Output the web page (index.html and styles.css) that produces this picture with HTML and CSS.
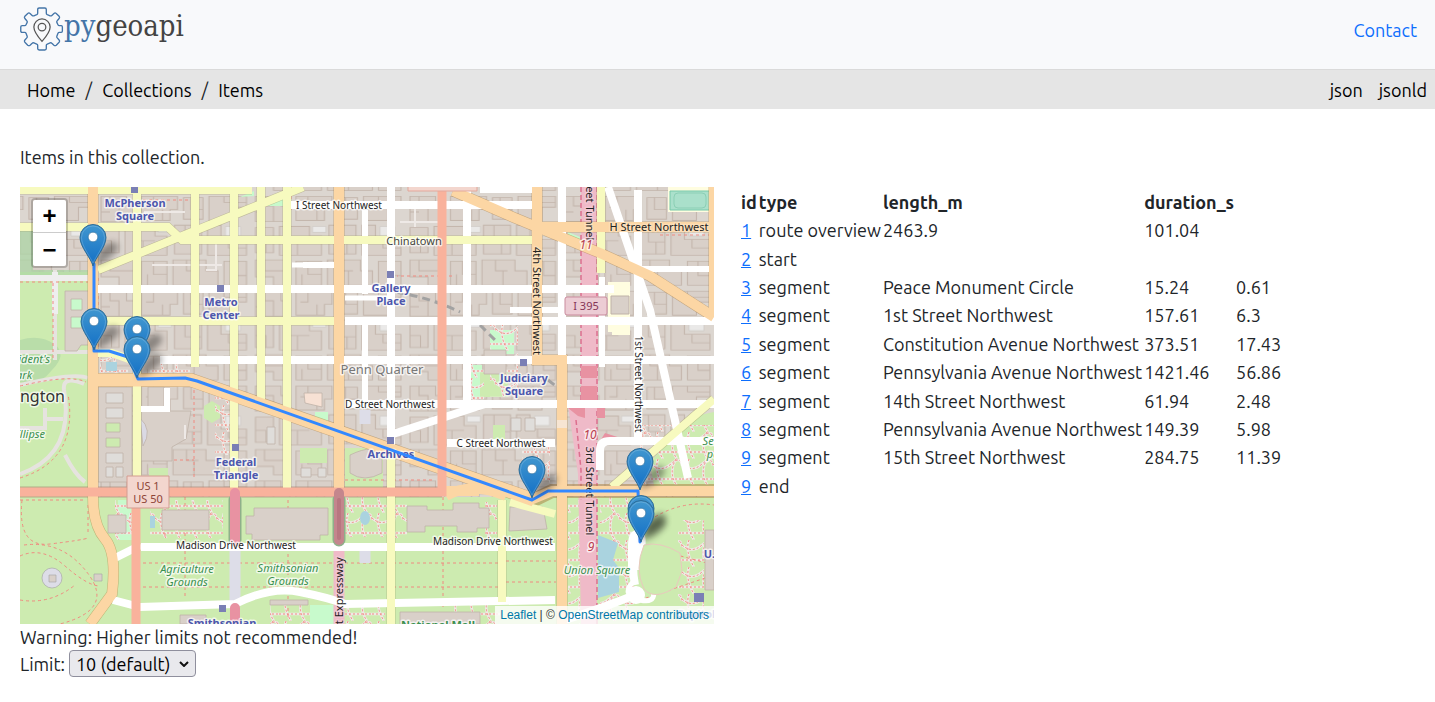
FILE: index.html
```html
<!DOCTYPE html>
<html lang="en">
<head>
<meta charset="utf-8">
<title>Items - pygeoapi</title>
<meta name="viewport" content="width=device-width, initial-scale=1">
<link rel="stylesheet" href="styles.css">
</head>
<body>
<header class="navbar">
  <a class="brand" href="#" aria-label="pygeoapi home">
    <svg class="brand-gear" viewBox="-1 -1 46 46" aria-hidden="true">
      <path fill="none" stroke="#4475a8" stroke-width="1.400" stroke-linejoin="round" d="M19 0h6q1.500 0 1.500 1.500v4q0 1 1 1.500l3 1.200q1 .4 1.800-.4l2.200-2.100q1.200-1 2.400 0l3 3q1 1.200 0 2.400l-2 2.200q-.8.800-.4 1.800l1.200 2.400q.4 1 1.400 1h2q1.200 0 1.200 1.500v4q0 1.500-1.200 1.500h-2q-1 0-1.400 1l-1.200 3q-.4 1 .4 1.800l2 2.200q1 1.200 0 2.400l-3 3q-1.200 1-2.400 0l-2.200-2q-.8-.8-1.800-.4l-3 1.200q-1 .4-1 1.400v3.400q0 1.500-1.500 1.500h-6q-1.500 0-1.500-1.500v-3.400q0-1-1-1.400l-3-1.200q-1-.4-1.800.4l-2.200 2q-1.200 1-2.400 0l-3-3q-1-1.200 0-2.400l2-2.200q.8-.8.400-1.800l-1.200-3q-.4-1-1.400-1h-2.600q-1.500 0-1.500-1.500v-4q0-1.500 1.500-1.500h2.600q1 0 1.400-1l1.200-2.400q.4-1-.4-1.800l-2-2.200q-1-1.200 0-2.400l3-3q1.200-1 2.400 0l2.200 2.100q.8.800 1.800.4l3-1.200q1-.5 1-1.500v-4q0-1.500 1.500-1.500z"/>
      <path fill="none" stroke="#555" stroke-width="1.300" d="M22 35c-4-4.500-8.500-10-8.500-15a8.500 8.500 0 0 1 17 0c0 5-4.500 10.500-8.500 15z"/>
      <circle cx="22" cy="20" r="4" fill="none" stroke="#555" stroke-width="1.300"/>
    </svg>
    <span class="brand-name"><span class="brand-py">py</span>geoapi</span>
  </a>
  <nav><a class="contact" href="#">Contact</a></nav>
</header>

<div class="crumbs">
  <nav class="crumb-path" aria-label="Breadcrumb">
    <a href="#">Home</a><span>/</span><a href="#">Collections</a><span>/</span><a href="#">Items</a>
  </nav>
  <nav class="formats" aria-label="Formats"><a href="#">json</a><a href="#">jsonld</a></nav>
</div>

<main class="page">
  <p class="intro">Items in this collection.</p>
  <div class="columns">
    <section class="left">
      <div class="map">
        <svg class="map-canvas" viewBox="20 187 694 437" preserveAspectRatio="xMidYMid slice" role="img" aria-label="Street map with route">
          <defs>
            <pattern id="blocks" width="103" height="79" patternUnits="userSpaceOnUse" patternTransform="translate(98 194) scale(1.500 1.200)">
              <rect width="103" height="79" fill="#dcd6d0"/>
              <g fill="#d9d0c9" stroke="#c3b5ab" stroke-width=".7">
                <path d="M2 2h17v8h6v13H2zM29 2h24v11h-5v9H29zM57 3h13v18H57zM74 2h25v9h-9v11H74zM2 28h12v21H2zM18 27h20v8h8v16H18zM51 26h18v24H51zM73 26h9v12h17v13H73zM2 55h23v21H14v-7H2zM29 56h17v20H29zM50 55h22v9h8v12H50zM84 56h15v20H84z"/>
                <path fill="none" d="M8 2v8h6v13M2 15h6M37 2v9h-5M43 13v9M62 3v10h8M84 2v5h15M24 27v12h14M30 39v12M2 39h7v10M58 26v14h11M63 40v10M87 38v7h12M8 55v9h17M37 56v11h9M33 67v9M59 55v9h8M64 64v12M91 56v12h8"/>
              </g>
              <path d="M40 27h9v5h-9zM85 27h10v8H85z" fill="#eae9e8" stroke="#cfcac6" stroke-width=".6"/>
            </pattern>
            <pattern id="paths" width="31" height="27" patternUnits="userSpaceOnUse">
              <g fill="none" stroke="#eeeae6" stroke-width="2.500"><path d="M0 5Q10 14 20 5T31 7M7 0Q3 12 12 27M25 0Q17 14 26 27M0 20h31"/></g>
              <g fill="none" stroke="#f28a80" stroke-width="1" stroke-dasharray="2 2"><path d="M0 5Q10 14 20 5T31 7M7 0Q3 12 12 27M25 0Q17 14 26 27M0 20h31"/></g>
            </pattern>
            <linearGradient id="pinfill" x1="0" y1="0" x2="0" y2="1"><stop offset="0" stop-color="#4197cf"/><stop offset="1" stop-color="#126fc6"/></linearGradient>
            <filter id="soft" x="-50%" y="-50%" width="200%" height="200%"><feGaussianBlur stdDeviation="3"/></filter>
            <g id="pin">
              <path d="M0 0L7-17Q19-28 24-22T12-5z" fill="#000" opacity=".36" filter="url(#soft)"/>
              <path d="M0 0C-2-8-13-19-13-28.500a13 13 0 0 1 26 0C13-19 2-8 0 0z" fill="url(#pinfill)" stroke="#2e6c97" stroke-width="1"/>
              <path d="M0-3C-3-10-11.500-20-11.500-28.500a11.500 11.500 0 0 1 23 0C11.500-20 3-10 0-3z" fill="none" stroke="#fff" stroke-opacity=".18"/>
              <circle cy="-29" r="4.800" fill="#fff" stroke="#2e6c97" stroke-width=".6"/>
            </g>
          </defs>

          <rect x="20" y="187" width="694" height="437" fill="url(#blocks)"/>

          <!-- parks -->
          <path fill="#cdebb0" d="M20 272h68v225H20zM20 497h694v127H20z"/>
          <path fill="#a9d5a4" opacity=".7" d="M20 229h13v41h55v8H20z"/>
          <path fill="#b9dda9" d="M60 272h28v3H60zM20 340q20-6 34 4t-2 26q-14 18-32 12z"/>
          <path fill="#c8facc" d="M140 188h50v2h-50zM240 197l14-6v5zM265 203l18-7v10h-18zM315 412h13v14h-13zM470 365h12v32h-12zM490 330h24v24h-24zM568 232l12 5v4h-12zM310 605h25v19h-25zM118 500h20v40h-20z"/>
          <path fill="#cdebb0" d="M204 406l8-5 8 5v12l-8 5-8-5zM300 448h27v15h-27zM345 448h38v40h-38zM149 468h19v9h-19zM480 372h28v25h-28zM493 425h12v18h-12zM650 462l40-45 24-5v74h-60z"/>
          <path fill="url(#paths)" d="M100 355h28v18h-28zM150 363h40v10h-40zM490 325h28v72h-28zM522 445h28v38h-28zM600 497h34v124h-34zM345 497h42v40h-42zM150 500h73v38h-73zM640 425h74v60h-74zM470 360h14v40h-14zM345 605h40v19h-40zM115 500h20v40h-20zM568 500h12v124h-12zM395 502h12v36h-12zM485 502h12v36h-12zM678 520h26v90h-26zM215 395h20v60h-20zM270 605h40v19h-40zM450 605h50v19h-50z"/>
          <!-- ellipse and president's park paths -->
          <g fill="none" stroke="#e6e3df" stroke-width="4"><path d="M20 385Q75 372 88 378M55 270v90M20 474Q75 455 64 390Q62 375 84 384M20 352h68M65 455q10 20 20 27M45 408v20h-25M45 419h18"/></g>
          <path d="M55 272v42M20 278h68" stroke="#eee" stroke-width="6" fill="none"/>
          <g fill="none" stroke="#f08a80" stroke-width="1" stroke-dasharray="3 3"><path d="M53 283v77M20 282h68M20 386Q70 374 86 382M20 478Q79 460 68 394M20 500h66M22 500q-5 48 28 44t38-6M20 556q22-10 45 10t35 20M20 600q30 5 55-15M24 545q40-5 65 30T60 624M88 505v30M143 563h196M143 587h196M345 563h155M345 587h155M185 497v100M443 497v110M288 500v120M506 561h50M506 582h50M165 497v40M640 545l74 20M640 600l74-25M650 520q30-20 64-15M98 278v80M150 390v20M137 200h55M291 190v20M367 210v70M452 276h-55M345 321h46M262 350v50M660 235h54M640 270h74M345 480h90M194 390v90M144 460h50"/></g>
          <!-- museums and landmark buildings -->
          <g fill="#d9d0c9" stroke="#bfb2a8" stroke-width=".8">
            <path d="M65 291h24v54h-8l-4 6H65zM98 387h34v95h-34zM141 411h50l-5 28-14 8v14h-31zM162 510h47v20h-47zM254 508h74v27h-8v5h-68v-6h-6v-18h8zM407 506h20v4h26v-7h26v5h10v20h-12v4h-20v-6h-32v6h-18zM108 515h18v18h-18zM510 507h33l4 22-38 2zM705 530h9v60h-9zM148 387h16v20h-16zM350 455q25-12 32 0v18q-18 10-32 0zM400 612h80v12h-80zM270 600h38v5h-38zM180 615h26v9h-26zM484 350h22v24h-22z"/>
            <path fill="#dfddda" d="M106 393h17v10h-17zM106 408h17v10h-17zM106 453h17v10h-17zM106 467h7v10h-7zM116 467h7v10h-7zM267 427h8v17h-8zM301 468h10v9h-10zM318 468h8v9h-8zM511 418h10v13h-10zM525 418h10v13h-10z"/>
            <path fill="#cdebb0" d="M106 423h14v9h-14zM106 438h14v9h-14z"/><path fill="#c8facc" d="M71 299h11v11H71zM71 317h11v11H71z"/>
            <path fill="#dad9e4" d="M140 418q13 12 3 28z"/>
            <path fill="#f7e1d4" d="M304 393h18v14l-17-4z"/>
          </g>
          <g fill="#aad3df"><path d="M106 362h11v9h-11zM150 516h5v12h-5z"/><ellipse cx="365" cy="518" rx="5" ry="7"/></g>
          <path fill="#fffde0" d="M608 282h22v50h-22zM612 318h18v17h-18zM668 187h46v25h-46z"/>
          <path fill="#aae0cb" stroke="#77c8aa" d="M670 191h40v19h-40z"/><rect x="674" y="193" width="32" height="15" rx="4" fill="none" stroke="#8ccfb5"/>
          <path fill="#d9d0c9" stroke="#bfb2a8" d="M611 296h18v18h-18z"/>
          <g fill="none" stroke="#eee9e6" stroke-width="2"><path d="M145 220v-8h40M152 265h70M216 240v30h-10M185 425v14M440 222h-40M415 202v25"/></g>
          <path fill="none" stroke="#a2a2a2" stroke-width="3" stroke-dasharray="8 5" d="M345 290q60-4 115 22M480 325l18 18M548 380l18 14"/>

          <!-- tunnels -->
          <path fill="#efbac8" d="M581 187h17v218h-1v219h-16l-3-150-10-69h13z"/>
          <path fill="none" stroke="#dc6f8e" stroke-width="1.500" stroke-dasharray="5 3" d="M581 187v218M597 187v437M576 420l5 50v30"/>
          <path fill="#e892a2" d="M581 366h16v12h-16zM581 386h16v14h-16zM568 408h17v10l-7-2zM597 408h8v10h-8zM605 433l25 8h-30z"/>
          <path stroke="#dddde8" stroke-width="11" fill="none" d="M235 545v60M365 548v15M365 410v14"/>
          <path d="M339 545v79" stroke="#efbac8" stroke-width="11"/>
          <path fill="#aad3df" d="M598 535l20 8-5 17 6 8v24l-21 6z"/>

          <!-- road casings -->
          <g fill="none" stroke="#a2a06a" stroke-opacity=".5">
            <path stroke-width="9" d="M20 190h232M20 227h148l14 13h360M98 270L303 187M98 321h241M137 187v300M195 187v180M234 187v304M261 187v215M287 187v304M391 445v179M502 500v102M612 487L714 399M601 187v86"/>
            <path stroke-width="11" stroke="#a97b3a" d="M93 187v310q0 28 12 42t7 55L90 624M339 187v305M537 187v173h25v264M537 227h177M453 191L515 218L600 253L650 276L714 317M714 187v130"/>
            <path stroke-width="14" stroke="#a97b3a" d="M93 380h98l343 120 18-9h162"/>
            <path stroke-width="11" stroke="#9a705d" d="M20 492h422"/>
          </g>
          <!-- minor roads -->
          <g fill="none" stroke="#fff" stroke-width="8">
            <path d="M98 289h516M285 205h248M345 321h369M160 360h554M345 404h369M447 443h108M391 187v258M467 187v218M562 187v173M638 190v250M287 190v16M393 434L485 404M608 187L650 310L688 478M600 470V450q0-9 10-9h104M638 500v45M141 547h414M113 559l28-14M113 600l27 7 95-3Q270 586 300 592t45 12l210-4M638 540q-8 20-3 45M635 595q-30 12-70 25"/>
            <path stroke-width="6" d="M365 210v84M365 321v85M303 265h35M141 409h26V388M480 190h60M640 269h74M510 310h52M602 277v90"/>
            <path stroke-width="5" d="M345 298h45M292 265h45M635 580q-16 15 5 20t10-20-10-55"/>
          </g>
          <g fill="none" stroke="#f7fabf" stroke-width="8">
            <path d="M20 190h232M20 227h148l14 13h360M98 270L303 187M98 321h241M137 187v300M195 187v180M234 187v304M261 187v215M287 187v304M391 445v179M502 500v102M612 487L714 399M601 187v86"/>
            <path d="M510 502l45 12M98 353h14l25 9"/>
          </g>
          <g fill="none" stroke="#fcd6a4" stroke-width="10">
            <path d="M93 187v310q0 28 12 42t7 55L90 624M339 187v305M537 187v173h25v264M537 227h177M453 191L515 218L600 253L650 276L714 317M714 187v130"/>
            <path stroke-width="13" d="M93 380h98l343 120"/>
            <path stroke-width="10" d="M446 491h33M530 500l22-9h162M446 496q25-15 60 0"/>
          </g>
          <g fill="none" stroke="#f9b29c" stroke-width="9"><path d="M20 492h422V187M136 500v124"/></g>
          <path d="M562 420v8" stroke="#f7e5d2" stroke-width="10"/>
          <g fill="none" stroke-linecap="round" stroke-width="10">
            <path stroke="#8fb08a" stroke-width="13" d="M235 500v40M339 500v40"/>
            <path stroke="#e892a2" d="M235 493v48M235 608v20"/>
            <path stroke="#c4868d" d="M339 493v47"/><path stroke="#b87780" stroke-width="4" d="M339 500v38"/>
          </g>
          <path fill="#fff" d="M627 595a9 9 0 1 0 18 0a9 9 0 1 0-18 0M628 545q0-15 10-15t7 20l-5 20h-12z"/>
          <path fill="#cdebb0" d="M644 545q16-4 36 8l2 18-6 16q-22 14-32 2-10-20 0-44z" stroke="#e9c9bd"/>
          <g fill="#dddde8" stroke="#a9a9a9" stroke-width=".7"><circle cx="52" cy="578" r="10"/><path fill="#d9d0c9" d="M49 575h7v7h-7zM94 574h8v7h-8z"/></g>
          <g fill="#7a7fb5"><path d="M131 187h7v6h-7zM217 285h7v7h-7zM387 271h7v7h-7zM232 444h7v7h-7zM387 437h7v7h-7zM520 359h7v7h-7zM219 605h7v7h-7zM694 593h10v9h-10z"/></g>

          <!-- shields -->
          <g stroke-width="1"><path fill="#f3d6ce" stroke="#d39c90" d="M127 476h42v32h-42z"/><path fill="#f3d6ce" stroke="#e2a79b" d="M408 180h69v11h-69z"/><rect x="565" y="297" width="42" height="18" rx="2" fill="#ecccd4" stroke="#c98b9d"/></g>
          <g class="shield-text"><text x="148" y="490">US 1</text><text x="148" y="503">US 50</text><text x="586" y="310" fill="#863557">I 395</text></g>

          <!-- labels -->
          <g class="label station">
            <text x="135" y="207">McPherson</text><text x="135" y="220">Square</text>
            <text x="221" y="306">Metro</text><text x="221" y="319">Center</text>
            <text x="391" y="292">Gallery</text><text x="391" y="305">Place</text>
            <text x="236" y="466">Federal</text><text x="236" y="479">Triangle</text>
            <text x="391" y="458">Archives</text>
            <text x="524" y="382">Judiciary</text><text x="524" y="395">Square</text>
            <text x="222" y="627">Smithsonian</text><text x="714" y="558">U.S.</text><text x="696" y="618">Capitol</text>
          </g>
          <g class="label street">
            <text x="339" y="209">I Street Northwest</text>
            <text x="390" y="408">D Street Northwest</text><text x="501" y="447">C Street Northwest</text>
            <text x="236" y="549">Madison Drive Northwest</text><text x="493" y="545">Madison Drive Northwest</text>
            <text transform="translate(635 384) rotate(90)">1st Street Northwest</text>
          </g>
          <g class="label street major">
            <text x="659" y="231">H Street Northwest</text>
            <text transform="translate(533 301) rotate(90)">4th Street Northwest</text>
            <text transform="translate(586 491) rotate(90)">3rd Street Tunnel</text>
            <text transform="translate(586 196) rotate(90)">3rd Street Tunnel</text>
            <text transform="translate(343 604) rotate(-90)">Street Expressway</text>
          </g>
          <g class="label place"><text x="414" y="245">Chinatown</text></g>
          <g class="label quarter"><text x="382" y="374">Penn Quarter</text></g>
          <g class="label city"><text x="65" y="402" text-anchor="end">Washington</text></g>
          <g class="label exit"><text x="586" y="249">11</text><text x="590" y="439">10</text><text x="591" y="551">9</text></g>
          <g class="label park">
            <text x="187" y="573">Agriculture</text><text x="187" y="586">Grounds</text>
            <text x="288" y="572">Smithsonian</text><text x="288" y="585">Grounds</text>
            <text x="597" y="574">Union Square</text>
            <text x="50" y="363" text-anchor="end">President's</text><text x="21" y="379">Park</text>
            <text x="45" y="438" text-anchor="end">The Ellipse</text>
            <text x="719" y="445">Senate</text><text x="718" y="458">park</text>
            <text x="438" y="629" class="mall">National Mall</text>
          </g>

          <path fill="none" stroke="#38f" stroke-width="3" stroke-linejoin="round" stroke-linecap="round" d="M94 264v87h15l19 6 10 22 47-1 12 3 335 119 16-9h90l2 51"/>
          <use href="#pin" x="93" y="266"/><use href="#pin" x="94" y="350"/><use href="#pin" x="137" y="358"/><use href="#pin" x="137" y="378"/>
          <use href="#pin" x="532" y="498"/><use href="#pin" x="640" y="490"/><use href="#pin" x="641" y="537"/><use href="#pin" x="641" y="542"/>
        </svg>
        <div class="zoom"><button type="button" aria-label="Zoom in">+</button><button type="button" aria-label="Zoom out">−</button></div>
        <div class="attribution"><a href="#">Leaflet</a> | © <a href="#">OpenStreetMap contributors</a></div>
      </div>
      <p class="warning">Warning: Higher limits not recommended!</p>
      <div class="limit"><label for="limit">Limit:</label>
        <span class="select-wrap"><select id="limit"><option>10 (default)</option><option>100</option><option>1000</option></select><svg viewBox="0 0 10 6" aria-hidden="true"><path d="M1 1l4 4 4-4" fill="none" stroke="#111" stroke-width="2"/></svg></span>
      </div>
    </section>

    <section class="right">
      <table class="items">
        <thead><tr><th>id</th><th>type</th><th>length_m</th><th>duration_s</th><td></td></tr></thead>
        <tbody>
          <tr><td><a href="#">1</a></td><td>route overview</td><td>2463.9</td><td>101.04</td><td></td></tr>
          <tr><td><a href="#">2</a></td><td>start</td><td></td><td></td><td></td></tr>
          <tr><td><a href="#">3</a></td><td>segment</td><td>Peace Monument Circle</td><td>15.24</td><td>0.61</td></tr>
          <tr><td><a href="#">4</a></td><td>segment</td><td>1st Street Northwest</td><td>157.61</td><td>6.3</td></tr>
          <tr><td><a href="#">5</a></td><td>segment</td><td>Constitution Avenue Northwest</td><td>373.51</td><td>17.43</td></tr>
          <tr><td><a href="#">6</a></td><td>segment</td><td>Pennsylvania Avenue Northwest</td><td>1421.46</td><td>56.86</td></tr>
          <tr><td><a href="#">7</a></td><td>segment</td><td>14th Street Northwest</td><td>61.94</td><td>2.48</td></tr>
          <tr><td><a href="#">8</a></td><td>segment</td><td>Pennsylvania Avenue Northwest</td><td>149.39</td><td>5.98</td></tr>
          <tr><td><a href="#">9</a></td><td>segment</td><td>15th Street Northwest</td><td>284.75</td><td>11.39</td></tr>
          <tr><td><a href="#">9</a></td><td>end</td><td></td><td></td><td></td></tr>
        </tbody>
      </table>
    </section>
  </div>
</main>
</body>
</html>
```
FILE: styles.css
```css
* { box-sizing: border-box; }
body {
  margin: 0;
  background: #fff;
  color: #212529;
  font-family: Ubuntu, "Noto Sans", sans-serif;
  font-size: 18px;
  line-height: 24px;
}
a { color: #0d6efd; }
p { margin: 0; }

.navbar {
  display: flex;
  justify-content: space-between;
  align-items: flex-start;
  padding: 7px 18px 18px 20px;
  background: #f8f9fb;
}
.brand { display: flex; align-items: flex-start; text-decoration: none; }
.brand-gear { width: 44px; height: 44px; }
.brand-name {
  color: #444;
  font-family: "DejaVu Serif Condensed", "DejaVu Serif", serif;
  font-size: 29px;
  line-height: 38px;
}
.brand-py { color: #4475a8; }
.contact { display: block; padding-top: 11px; text-decoration: none; }

.crumbs {
  display: flex;
  justify-content: space-between;
  padding: 8px 8px 7px 27px;
  border-top: 1px solid #dadada;
  background: #e5e5e5;
}
.crumbs a { color: #000; text-decoration: none; }
.crumb-path { display: flex; gap: 10px; }
.formats { display: flex; gap: 16px; }

.page { padding: 36px 3px 24px 20px; }
.intro { margin-bottom: 18px; }
.columns { display: grid; grid-template-columns: 1fr 1fr; gap: 24px; }

.map { position: relative; aspect-ratio: 694 / 437; overflow: hidden; }
.map-canvas { display: block; width: 100%; height: 100%; }
.map-canvas text { font-family: "Noto Sans", sans-serif; text-anchor: middle; }
.map-canvas text[text-anchor="end"] { text-anchor: end; }
.label { paint-order: stroke; stroke: #fff; stroke-width: 3px; stroke-opacity: .7; stroke-linejoin: round; }
.station { fill: #4d57ad; font-size: 11px; font-weight: 700; }
.street { fill: #222; font-size: 10px; }
.major { font-size: 11px; stroke-opacity: .2; }
.place { fill: #444; font-size: 11px; }
.quarter { fill: #777; font-size: 13px; }
.city { fill: #333; font-size: 16px; }
.exit { fill: #b8404e; font-size: 12px; font-style: italic; }
.park { fill: #3c9150; font-size: 11px; font-style: italic; }
.mall { font-weight: 700; font-style: normal; }
.shield-text { fill: #8d4437; font-size: 11px; }

.zoom {
  position: absolute;
  top: 11px;
  left: 11px;
  display: flex;
  flex-direction: column;
  border: 2px solid rgba(0, 0, 0, .2);
  border-radius: 4px;
  background-clip: padding-box;
}
.zoom button {
  width: 33px;
  height: 33px;
  padding: 0;
  border: 0;
  border-radius: 0 0 2px 2px;
  background: #fff;
  color: #000;
  font: bold 24px/30px "Liberation Sans", sans-serif;
}
.zoom button:first-child { border-bottom: 1px solid #ccc; border-radius: 2px 2px 0 0; }
.attribution {
  position: absolute;
  right: 0;
  bottom: 0;
  padding: 0 5px;
  background: rgba(255, 255, 255, .8);
  color: #333;
  font: 12px/18px "Liberation Sans", sans-serif;
}
.attribution a { color: #0078a8; text-decoration: none; }

.warning { line-height: 26px; }
.limit { display: flex; align-items: center; gap: 4px; }
.select-wrap { position: relative; }
.select-wrap svg { position: absolute; right: 7px; top: 11px; width: 10px; height: 6px; pointer-events: none; }
.limit select {
  display: block;
  height: 27px;
  padding: 0 24px 0 6px;
  border: 1px solid #8f8f9d;
  border-radius: 4px;
  background: #e9e9ed;
  color: #000;
  font: inherit;
  appearance: none;
}

.right { padding-left: 1px; }
.items { height: 314px; border-spacing: 2px; white-space: nowrap; }
.items th, .items td { padding: 1px 0; text-align: left; }
```
